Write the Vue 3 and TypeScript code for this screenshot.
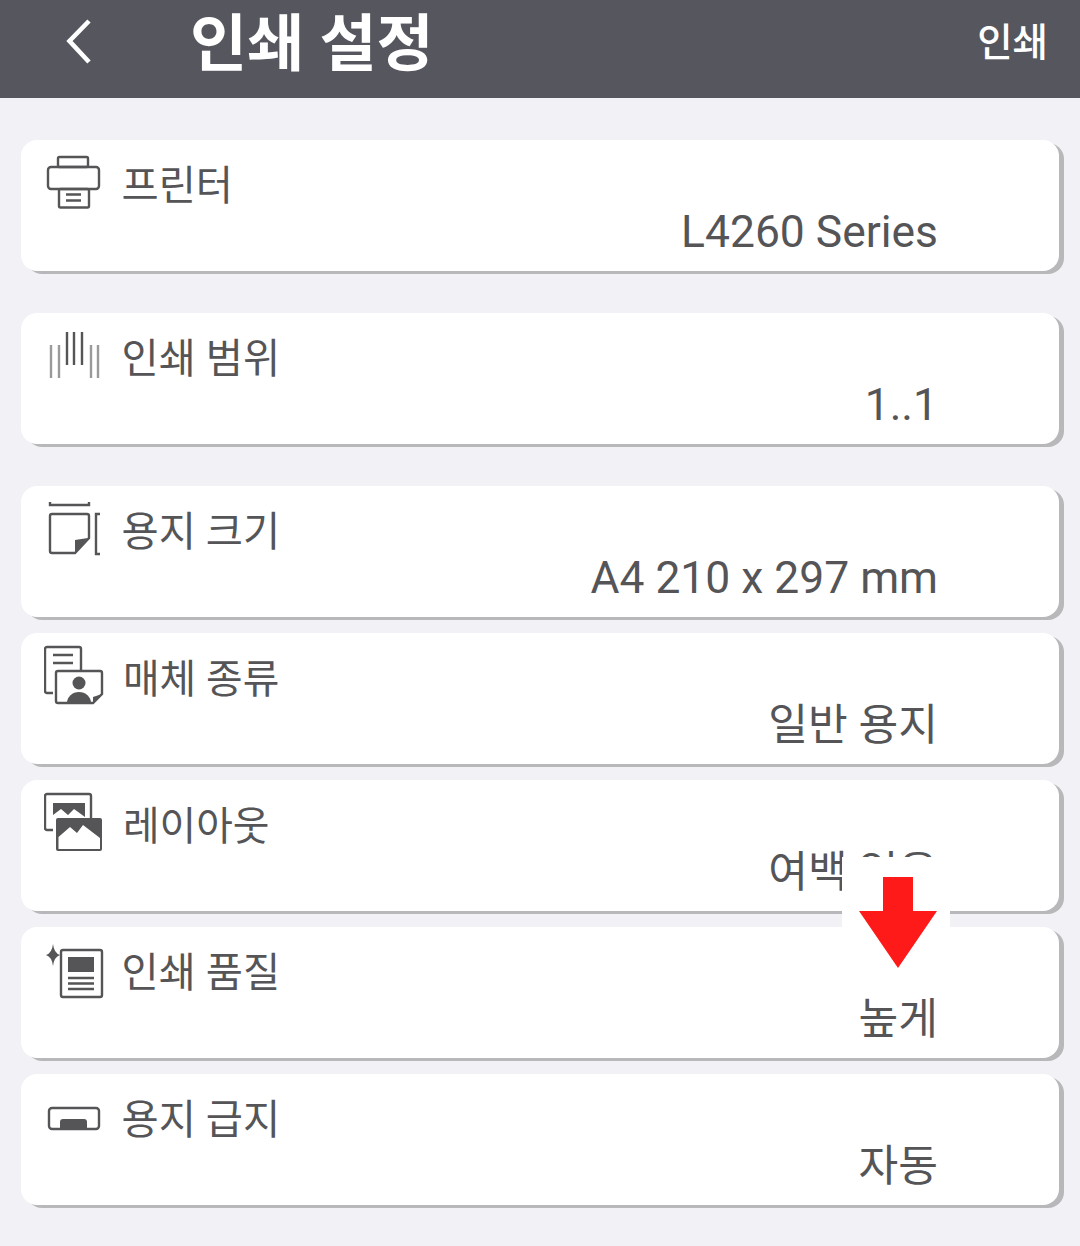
<template>
  <div class="page">
    <header class="topbar">
      <svg class="topbar__back" viewBox="0 0 40 60" aria-hidden="true">
        <path d="M31 8 L11.5 28 L31 49" fill="none" stroke="#fff" stroke-width="4.6" />
      </svg>
      <h1 class="topbar__title">인쇄 설정</h1>
      <span class="topbar__action">인쇄</span>
    </header>

    <main class="list">
      <section
        v-for="row in rows"
        :key="row.icon"
        :class="['card', { 'card--spaced': row.spaced }]"
      >
        <div class="card__head">
          <svg class="card__icon" viewBox="0 0 60 60" aria-hidden="true">
            <g v-if="row.icon === 'printer'" class="line">
              <rect x="14" y="5" width="30" height="10" rx="1.5" />
              <rect x="4" y="15" width="51" height="22" rx="3" />
              <rect x="15" y="37" width="30" height="18.5" rx="1.5" />
              <path d="M22 42.5 H37 M22 48.5 H37" />
            </g>
            <g v-else-if="row.icon === 'range'" class="line">
              <path class="line--soft" d="M7 20 V53 M15 20 V53 M47 20 V53 M54 20 V53" />
              <path d="M23 7 V40 M30 7 V40 M38 7 V40" />
            </g>
            <g v-else-if="row.icon === 'size'" class="line">
              <path d="M6 4 V7 H45 V4" />
              <path d="M8 16 H43 A2 2 0 0 1 45 18 V40 L31 55 H8 A2 2 0 0 1 6 53 V18 A2 2 0 0 1 8 16 Z" />
              <path class="fill" d="M44 40 L31 42 V55 Z" />
              <path d="M56 16 H52 V56 H56" />
            </g>
            <g v-else-if="row.icon === 'media'" class="line">
              <path d="M9 48 H3 A2 2 0 0 1 1 46 V4 A2 2 0 0 1 3 2 H35 A2 2 0 0 1 37 4 V25" />
              <path d="M9 10 H29 M9 18 H29" />
              <path d="M14 26 H56 A2 2 0 0 1 58 28 V49 L49 58 H14 A2 2 0 0 1 12 56 V28 A2 2 0 0 1 14 26 Z" />
              <circle class="fill" cx="35" cy="38" r="6.5" />
              <path class="fill" d="M23 58 A12 11 0 0 1 47 58 Z" />
              <path class="fill" d="M58 49 L49 58 V52 Z" />
            </g>
            <g v-else-if="row.icon === 'layout'" class="line">
              <path d="M9 38 H3 A2 2 0 0 1 1 36 V4 A2 2 0 0 1 3 2 H45 A2 2 0 0 1 47 4 V26" />
              <path class="fill" d="M9 11 H41 V25 L30 17 L24 23 L17 17 L9 23 Z" />
              <rect class="fill" x="12" y="26" width="46" height="33" rx="2" />
              <path class="blank" d="M14.5 57 V45 L26 35 L33 41 L39 33 L56 46 V57 Z" />
            </g>
            <g v-else-if="row.icon === 'quality'" class="line">
              <path class="fill" d="M9 5 Q10 14 16 16 Q10 18 9 27 Q8 18 2 16 Q8 14 9 5 Z" />
              <rect x="17" y="11" width="41" height="47" rx="2" />
              <rect class="fill" x="24" y="18" width="26" height="15" />
              <path d="M24 39 H50 M24 44.5 H50 M24 50 H50" />
            </g>
            <g v-else class="line">
              <rect x="5" y="22" width="50" height="21" rx="3" />
              <path class="fill" d="M16 43 V36 A3 3 0 0 1 19 33 H40 A3 3 0 0 1 43 36 V43 Z" />
            </g>
          </svg>
          <span :class="['card__label', { 'card__label--wide': row.wide }]">{{ row.label }}</span>
        </div>
        <div :class="['card__value', { 'card__value--latin': row.latin }]">{{ row.value }}</div>
      </section>
    </main>

    <!-- 이미지 위에 덧그린 화살표 -->
    <div class="marker">
      <svg class="marker__arrow" viewBox="0 0 78 92" aria-hidden="true">
        <path d="M24 0 H54 V34 H78 L39 91 L0 34 H24 Z" fill="#ff1a1a" />
      </svg>
    </div>
  </div>
</template>

<script setup lang="ts">
interface SettingRow {
  icon: string;
  label: string;
  value: string;
  spaced?: boolean;
  wide?: boolean;
  latin?: boolean;
}

const rows: SettingRow[] = [
  { icon: 'printer', label: '프린터', value: 'L4260 Series', latin: true },
  { icon: 'range', label: '인쇄 범위', value: '1..1', spaced: true, latin: true },
  { icon: 'size', label: '용지 크기', value: 'A4 210 x 297 mm', spaced: true, latin: true },
  { icon: 'media', label: '매체 종류', value: '일반 용지', wide: true },
  { icon: 'layout', label: '레이아웃', value: '여백 없음', wide: true },
  { icon: 'quality', label: '인쇄 품질', value: '높게' },
  { icon: 'feed', label: '용지 급지', value: '자동' },
];
</script>

<style>
html,
body {
  background: #f1f1f6;
}
</style>

<style scoped>
.page {
  position: relative;
  height: 1246px;
  overflow: hidden;
  background: #f1f1f6;
  font-family: Roboto, 'Noto Sans CJK KR', sans-serif;
  color: #555558;
}

.topbar {
  display: flex;
  align-items: center;
  height: 98px;
  padding: 0 32px 12px 58px;
  box-sizing: border-box;
  background: #55565e;
  color: #fff;
}

.topbar__back {
  width: 40px;
  height: 60px;
  flex-shrink: 0;
}

.topbar__title {
  margin: 4px 0 0 92px;
  font-size: 62px;
  font-weight: 700;
  line-height: 1;
}

.topbar__action {
  margin-left: auto;
  font-size: 38.5px;
  font-weight: 500;
  line-height: 1;
}

.list {
  display: flex;
  flex-direction: column;
  gap: 16px;
  padding: 42px 21px 0;
}

.card {
  display: flex;
  flex-direction: column;
  height: 131px;
  padding: 12px 121px 0 23px;
  box-sizing: border-box;
  background: #fff;
  border-radius: 16px;
  box-shadow: 5px 3px 0 #b8b8bb;
}

.card--spaced {
  margin-top: 26px;
}

.card__head {
  display: flex;
  align-items: flex-start;
  height: 60px;
}

.card__icon {
  width: 60px;
  height: 60px;
  flex-shrink: 0;
}

.line {
  fill: none;
  stroke: #555558;
  stroke-width: 2.4;
}

.line--soft {
  stroke: #9a9a9c;
}

.fill {
  fill: #555558;
  stroke: none;
}

.blank {
  fill: #fff;
  stroke: none;
}

.card__label {
  margin: 11px 0 0 17.5px;
  font-size: 40.4px;
  line-height: 48px;
  white-space: nowrap;
}

.card__label--wide {
  margin-left: 19px;
  font-size: 39.8px;
}

.card__value {
  margin-top: -5px;
  font-size: 43.2px;
  line-height: 52px;
  text-align: right;
  white-space: nowrap;
}

.card__value--latin {
  margin-top: -6px;
  font-size: 44.4px;
}

.marker {
  position: absolute;
  left: 842px;
  top: 857px;
  width: 108px;
  height: 113px;
  background: #fff;
}

.marker__arrow {
  position: absolute;
  left: 17px;
  top: 20px;
  width: 78px;
  height: 92px;
}
</style>
